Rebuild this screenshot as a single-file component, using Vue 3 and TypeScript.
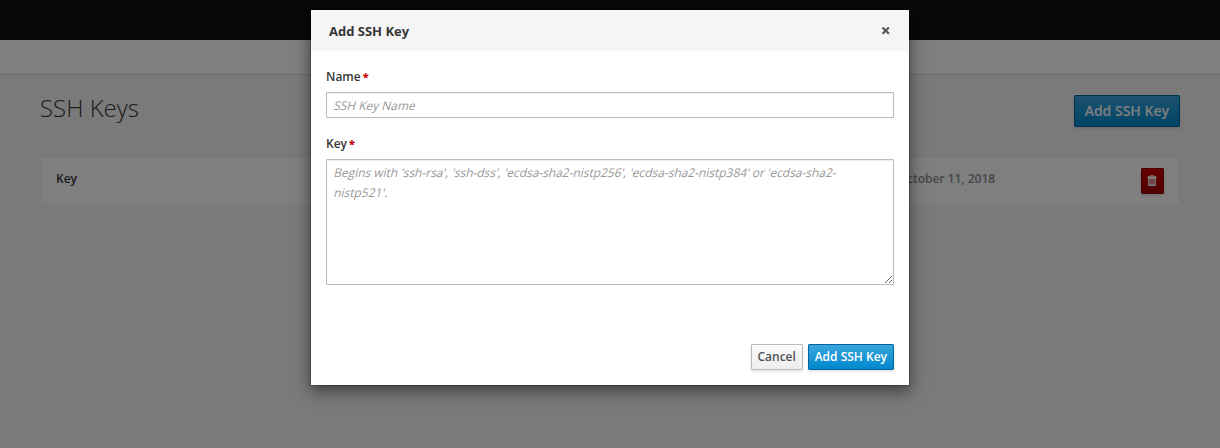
<script setup lang="ts">
import { ref } from 'vue'

interface SshKey {
  label: string
  created: string
}

const keys: SshKey[] = [{ label: 'Key', created: 'October 11, 2018' }]
const name = ref('')
const key = ref('')
const keyHint = [
  "Begins with 'ssh-rsa', 'ssh-dss', 'ecdsa-sha2-nistp256', 'ecdsa-sha2-nistp384' or 'ecdsa-sha2-",
  "nistp521'.",
]
</script>

<template>
  <div class="screen">
    <header class="masthead"></header>
    <nav class="subnav"></nav>
    <main class="page">
      <div class="page-head">
        <h1>SSH Keys</h1>
        <button class="btn primary large" type="button">Add SSH Key</button>
      </div>
      <div class="list">
        <div v-for="item in keys" :key="item.label" class="row">
          <span class="row-name">{{ item.label }}</span>
          <span class="row-date">{{ item.created }}</span>
          <button class="btn danger" type="button" aria-label="Delete">
            <svg width="10" height="12" viewBox="0 0 10 12">
              <path
                fill="#fff"
                fill-rule="evenodd"
                d="M3 1.2 3.6 0h2.8L7 1.2h2.5v1.6h-.6V10a1 1 0 0 1-1 1H2.1a1 1 0 0 1-1-1V2.8H.5V1.2zM4 1.2h2L5.8.8H4.2zM2.5 4v5.5h.9V4zm2.05 0v5.5h.9V4zM6.6 4v5.5h.9V4z"
              />
            </svg>
          </button>
        </div>
      </div>
    </main>

    <div class="backdrop">
      <section class="modal" role="dialog">
        <header class="modal-head">
          <h2>Add SSH Key</h2>
          <button class="close" type="button" aria-label="Close">
            <svg width="9" height="9" viewBox="0 0 9 9">
              <path d="M1.5 1.4 7.9 7.8M7.9 1.4 1.5 7.8" stroke="#555" stroke-width="2.1" />
            </svg>
          </button>
        </header>
        <form class="modal-body">
          <label for="key-name">Name<b>*</b></label>
          <div class="field">
            <input id="key-name" v-model="name" type="text" />
            <div v-if="!name" class="hint"><span>SSH Key Name</span></div>
          </div>
          <label for="key-value">Key<b>*</b></label>
          <div class="field">
            <textarea id="key-value" v-model="key" spellcheck="false"></textarea>
            <div v-if="!key" class="hint">
              <span v-for="line in keyHint" :key="line">{{ line }}</span>
            </div>
          </div>
        </form>
        <footer class="modal-foot">
          <button class="btn cancel" type="button">Cancel</button>
          <button class="btn primary" type="button">Add SSH Key</button>
        </footer>
      </section>
    </div>
  </div>
</template>

<style>
body {
  margin: 0;
  overflow: hidden;
}
</style>

<style scoped>
* {
  box-sizing: border-box;
}
.screen {
  position: relative;
  height: 448px;
  background: #f5f5f5;
  color: #363636;
  font: 12px/20px 'Open Sans', sans-serif;
}
button,
input,
textarea {
  font-family: inherit;
}
.masthead {
  height: 40px;
  background: #111;
}
.subnav {
  height: 35px;
  background: #fff;
  border-bottom: 1px solid #d9d9d9;
}
.page {
  padding: 20px 40px 0;
}
.page-head {
  display: flex;
  justify-content: space-between;
  align-items: flex-start;
  height: 62px;
}
h1 {
  margin: 0;
  font-size: 24px;
  line-height: 26px;
  font-weight: 300;
}
.list {
  border: 1px solid #f5f5f5;
  border-top-color: #f0f0f0;
}
.row {
  display: flex;
  align-items: center;
  height: 46px;
  padding: 0 15px;
  background: #fff;
  font-weight: 600;
}
.row-name {
  flex: 1;
  padding-bottom: 5px;
}
.row-date {
  width: 243.5px;
  padding-bottom: 5px;
  color: #8b8d8f;
}
.btn {
  height: 26px;
  padding: 2px 6px;
  border: 1px solid #bbb;
  border-radius: 1px;
  background: linear-gradient(#fafafa, #ededed);
  box-shadow: 0 2px 3px rgba(3, 3, 3, 0.1);
  color: #4d5258;
  font-size: 12px;
  line-height: 20px;
  font-weight: 600;
  white-space: nowrap;
}
.primary {
  border-color: #00659c;
  background: linear-gradient(#39a5dc, #0088ce);
  color: #fff;
}
.large {
  height: 32px;
  padding: 4px 10px;
  font-size: 14px;
  line-height: 22px;
}
.cancel {
  width: 52px;
  padding: 2px 0;
}
.danger {
  display: flex;
  align-items: center;
  justify-content: center;
  width: 23px;
  padding: 0 1px 0 0;
  border-color: #8b0000;
  background: linear-gradient(#c00, #a30000);
}
.backdrop {
  position: absolute;
  inset: 0;
  padding-top: 9px;
  background: rgba(0, 0, 0, 0.5);
}
.modal {
  width: 600px;
  height: 377px;
  margin: 0 auto;
  display: flex;
  flex-direction: column;
  border: 1px solid rgba(0, 0, 0, 0.2);
  background: #fff;
  background-clip: padding-box;
  box-shadow: 0 5px 15px rgba(0, 0, 0, 0.5);
}
.modal-head {
  display: flex;
  justify-content: space-between;
  align-items: center;
  height: 41px;
  padding: 0 19px 0 18px;
  background: #f5f5f5;
}
h2 {
  margin: 0;
  font-size: 13px;
  line-height: 20px;
  font-weight: 700;
}
.close {
  display: flex;
  padding: 0;
  border: 0;
  background: none;
}
.modal-body {
  flex: 1;
  display: flex;
  flex-direction: column;
  padding: 16px 15px 0;
}
label {
  margin-bottom: 5px;
  font-weight: 600;
}
label b {
  margin-left: 2px;
  color: #c00;
  font-size: 11px;
  line-height: 1;
}
.field {
  position: relative;
}
input,
textarea {
  display: block;
  width: 100%;
  padding: 2px 6px;
  border: 1px solid #bbb;
  border-radius: 1px;
  outline: none;
  background: #fff;
  box-shadow: inset 0 1px 1px rgba(3, 3, 3, 0.075);
  color: #363636;
  font-size: 12px;
  line-height: 20px;
}
input {
  height: 26px;
  margin-bottom: 16px;
}
textarea {
  height: 126px;
}
.hint {
  position: absolute;
  top: 4px;
  left: 7px;
  color: #999;
  letter-spacing: -0.035px;
  pointer-events: none;
  white-space: nowrap;
}
.hint span {
  display: block;
  transform: skewX(-14deg);
  transform-origin: 0 75%;
}
.modal-foot {
  display: flex;
  justify-content: flex-end;
  gap: 5px;
  padding: 0 15px 15px;
}
</style>
